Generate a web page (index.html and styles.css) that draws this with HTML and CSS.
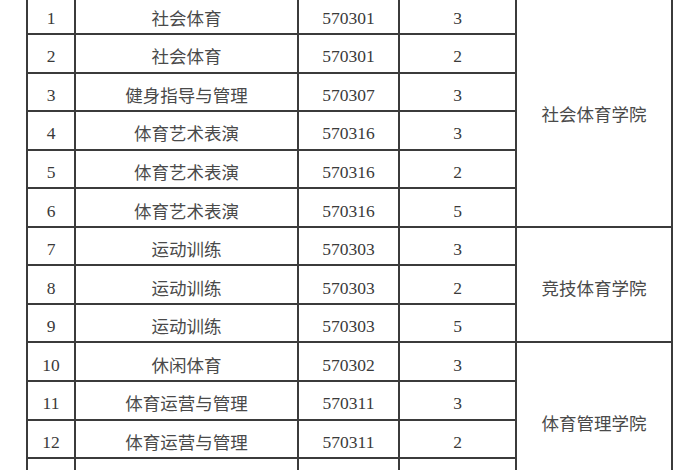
FILE: index.html
```html
<!DOCTYPE html>
<html lang="zh">
<head>
<meta charset="utf-8">
<link rel="stylesheet" href="styles.css">
</head>
<body>
<table class="grid">
  <colgroup>
    <col class="c-no"><col class="c-major"><col class="c-code"><col class="c-yrs"><col class="c-school">
  </colgroup>
  <tbody>
    <tr><td class="num">1</td><td class="zh">社会体育</td><td class="num">570301</td><td class="num">3</td><td class="zh school" rowspan="6">社会体育学院</td></tr>
    <tr><td class="num">2</td><td class="zh">社会体育</td><td class="num">570301</td><td class="num">2</td></tr>
    <tr><td class="num">3</td><td class="zh">健身指导与管理</td><td class="num">570307</td><td class="num">3</td></tr>
    <tr><td class="num">4</td><td class="zh">体育艺术表演</td><td class="num">570316</td><td class="num">3</td></tr>
    <tr><td class="num">5</td><td class="zh">体育艺术表演</td><td class="num">570316</td><td class="num">2</td></tr>
    <tr><td class="num">6</td><td class="zh">体育艺术表演</td><td class="num">570316</td><td class="num">5</td></tr>
    <tr><td class="num">7</td><td class="zh">运动训练</td><td class="num">570303</td><td class="num">3</td><td class="zh school" rowspan="3">竞技体育学院</td></tr>
    <tr><td class="num">8</td><td class="zh">运动训练</td><td class="num">570303</td><td class="num">2</td></tr>
    <tr><td class="num">9</td><td class="zh">运动训练</td><td class="num">570303</td><td class="num">5</td></tr>
    <tr><td class="num">10</td><td class="zh">休闲体育</td><td class="num">570302</td><td class="num">3</td><td class="zh school" rowspan="4">体育管理学院</td></tr>
    <tr><td class="num">11</td><td class="zh">体育运营与管理</td><td class="num">570311</td><td class="num">3</td></tr>
    <tr><td class="num">12</td><td class="zh">体育运营与管理</td><td class="num">570311</td><td class="num">2</td></tr>
    <tr><td class="num">13</td><td class="zh">电子竞技运动与管理</td><td class="num">570309</td><td class="num">3</td></tr>
  </tbody>
</table>
</body>
</html>
```

FILE: styles.css
```css
html, body {
  margin: 0;
  padding: 0;
  background: #ffffff;
  overflow: hidden;
}

.grid {
  border-collapse: collapse;
  table-layout: fixed;
  width: 647px;
  margin: -5.5px 0 0 26px;
  color: #3a3a3a;
}

.c-no { width: 48px; }
.c-major { width: 223px; }
.c-code { width: 101px; }
.c-yrs { width: 117px; }
.c-school { width: 156px; }

.grid tr {
  height: 38.55px;
}

.grid td {
  border: 2px solid #3b3b3b;
  text-align: center;
  vertical-align: middle;
  padding: 6px 0 0 0;
  font-size: 17.5px;
  line-height: 24px;
  white-space: nowrap;
}

.num {
  font-family: "Liberation Serif", serif;
}

.zh {
  font-family: "Noto Sans CJK SC", sans-serif;
  color: #4a4a4a;
  font-size: 17px;
}

.school {
  padding-top: 3px;
}
```
